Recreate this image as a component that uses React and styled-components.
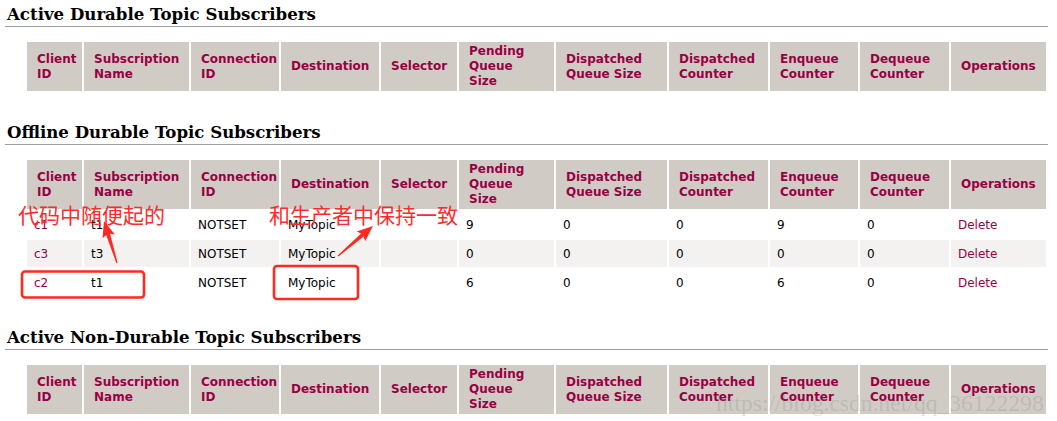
import React from 'react'
import styled, { createGlobalStyle } from 'styled-components'

const GlobalStyle = createGlobalStyle`
  html, body {
    margin: 0;
    padding: 0;
    background: #ffffff;
  }
`

const columns = [
  { label: ['Client', 'ID'], width: 55 },
  { label: ['Subscription', 'Name'], width: 105 },
  { label: ['Connection', 'ID'], width: 88 },
  { label: ['Destination'], width: 98 },
  { label: ['Selector'], width: 76 },
  { label: ['Pending', 'Queue', 'Size'], width: 95 },
  { label: ['Dispatched', 'Queue Size'], width: 111 },
  { label: ['Dispatched', 'Counter'], width: 99 },
  { label: ['Enqueue', 'Counter'], width: 88 },
  { label: ['Dequeue', 'Counter'], width: 89 },
  { label: ['Operations'], width: 95 },
]

const offline = [
  { client: 'c1', name: 't1', conn: 'NOTSET', dest: 'MyTopic', sel: '', pending: 9, dqs: 0, dc: 0, enq: 9, deq: 0 },
  { client: 'c3', name: 't3', conn: 'NOTSET', dest: 'MyTopic', sel: '', pending: 0, dqs: 0, dc: 0, enq: 0, deq: 0 },
  { client: 'c2', name: 't1', conn: 'NOTSET', dest: 'MyTopic', sel: '', pending: 6, dqs: 0, dc: 0, enq: 6, deq: 0 },
]

const SubscriberTable = ({ rows = [] }) =>
  <Table>
    <colgroup>
      {columns.map((c, i) => <Col key={i} $w={c.width} />)}
    </colgroup>
    <thead>
      <tr>
        {columns.map((c, i) =>
          <Th key={i}>
            {c.label.map((l, j) => <div key={j}>{l}</div>)}
          </Th>
        )}
      </tr>
    </thead>
    <tbody>
      {rows.map((r, i) =>
        <Row key={i} $odd={i % 2 === 1}>
          <Td><Link>{r.client}</Link></Td>
          <Td>{r.name}</Td>
          <Td>{r.conn}</Td>
          <Td>{r.dest}</Td>
          <Td>{r.sel}</Td>
          <Td>{r.pending}</Td>
          <Td>{r.dqs}</Td>
          <Td>{r.dc}</Td>
          <Td>{r.enq}</Td>
          <Td>{r.deq}</Td>
          <Td><Link>Delete</Link></Td>
        </Row>
      )}
    </tbody>
  </Table>

// arrow polygon tapering from tail to a triangular head
function arrowPoints(x1, y1, x2, y2) {
  const dx = x2 - x1
  const dy = y2 - y1
  const len = Math.hypot(dx, dy)
  const ux = dx / len
  const uy = dy / len
  const nx = -uy
  const ny = ux
  const head = 14
  const bx = x2 - ux * head
  const by = y2 - uy * head
  const p = (x, y) => `${x.toFixed(1)},${y.toFixed(1)}`
  return [
    p(x2, y2),
    p(bx + nx * 6.5 - ux * 2, by + ny * 6.5 - uy * 2),
    p(bx + nx * 2, by + ny * 2),
    p(x1 + nx * 0.6, y1 + ny * 0.6),
    p(x1 - nx * 0.6, y1 - ny * 0.6),
    p(bx - nx * 2, by - ny * 2),
    p(bx - nx * 6.5 - ux * 2, by - ny * 6.5 - uy * 2),
  ].join(' ')
}

export default function App() {
  return (
    <Page>
      <GlobalStyle />
      <Section>
        <Title>Active Durable Topic Subscribers</Title>
        <SubscriberTable />
      </Section>
      <Section>
        <Title>Offline Durable Topic Subscribers</Title>
        <SubscriberTable rows={offline} />
      </Section>
      <Section>
        <Title>Active Non-Durable Topic Subscribers</Title>
        <SubscriberTable />
      </Section>

      <Note $x={18} $y={199}>代码中随便起的</Note>
      <Note $x={269} $y={199}>和生产者中保持一致</Note>
      <Marks width="1057" height="421" viewBox="0 0 1057 421">
        <rect x="22" y="271.5" width="122" height="26" rx="3" fill="none" stroke="#ff2a1f" strokeWidth="2.6" />
        <rect x="274" y="266" width="84" height="33" rx="3" fill="none" stroke="#ff2a1f" strokeWidth="2.6" />
        <polygon points={arrowPoints(117, 263, 104, 221)} fill="#ff2a1f" />
        <polygon points={arrowPoints(338, 256, 373, 226)} fill="#ff2a1f" />
      </Marks>
      <Watermark>https://blog.csdn.net/qq_36122298</Watermark>
    </Page>
  )
}

const Page = styled.div`
  position: relative;
  width: 1043px;
  padding: 0 0 0 5px;
  font-family: "DejaVu Sans", Verdana, sans-serif;
`
const Section = styled.section`
  margin-bottom: 25px;
  &:last-of-type {
    margin-bottom: 0;
  }
`
const Title = styled.h2`
  margin: 0;
  padding: 5px 0 2px 2px;
  font-family: "DejaVu Serif", Georgia, serif;
  font-size: 16.6px;
  font-weight: bold;
  line-height: 19px;
  color: #000000;
  border-bottom: 1px solid #a19f9b;
`
const Table = styled.table`
  margin: 13px 0 0 20px;
  width: 1023px;
  table-layout: fixed;
  border-collapse: separate;
  border-spacing: 2px;
  font-size: 12px;
`
const Col = styled.col`
  width: ${p => p.$w}px;
`
const Th = styled.th`
  box-sizing: border-box;
  height: 49px;
  padding: 2px 4px 2px 10px;
  background: #d0ccc5;
  color: #990044;
  font-weight: bold;
  text-align: left;
  vertical-align: middle;
  line-height: 15px;
`
const Row = styled.tr`
  background: ${p => p.$odd ? '#f3f2f0' : '#ffffff'};
`
const Td = styled.td`
  box-sizing: border-box;
  height: 27px;
  padding: 0 4px 0 7px;
  color: #000000;
  vertical-align: middle;
  white-space: nowrap;
`
const Link = styled.span`
  color: #990044;
`
const Note = styled.span`
  position: absolute;
  left: ${p => p.$x}px;
  top: ${p => p.$y}px;
  font-family: "Noto Sans CJK SC", sans-serif;
  font-size: 21px;
  font-weight: 400;
  line-height: 30px;
  color: #ff2a2a;
`
const Marks = styled.svg`
  position: absolute;
  left: 0;
  top: 0;
  pointer-events: none;
`
const Watermark = styled.span`
  position: absolute;
  left: 716px;
  top: 390px;
  font-family: "Liberation Serif", serif;
  font-size: 23.6px;
  line-height: 26px;
  color: rgba(110, 110, 110, 0.2);
  pointer-events: none;
`
